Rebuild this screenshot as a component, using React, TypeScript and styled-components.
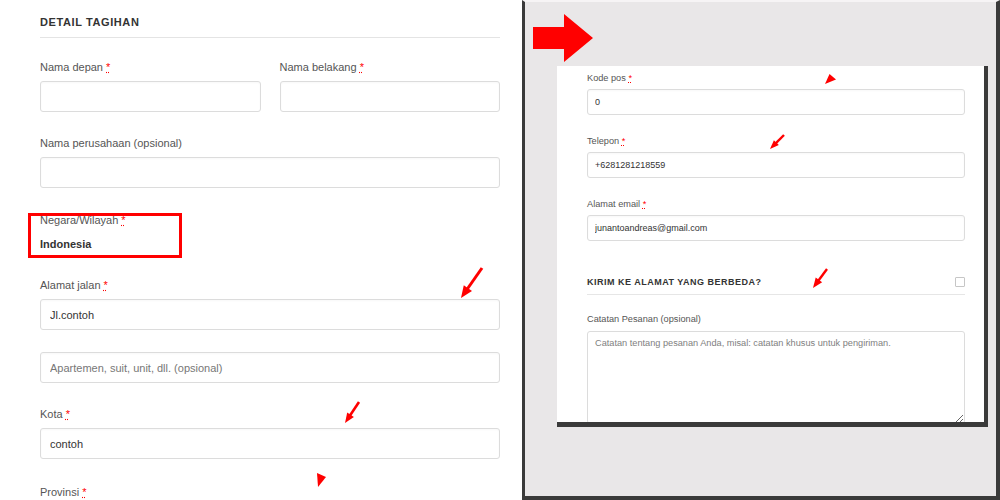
import React from "react";
import styled, { createGlobalStyle } from "styled-components";

const GlobalStyle = createGlobalStyle`
  html, body { margin: 0; padding: 0; background: #fff; }
  body { font-family: "Liberation Sans", Arial, sans-serif; }
  * { box-sizing: border-box; }
`;

const Page = styled.div`
  position: relative;
  display: flex;
  width: 1000px;
  height: 500px;
  overflow: hidden;
  background: #fff;
`;

const LeftPane = styled.section`
  flex: none;
  width: 522px;
  padding: 0 22px 0 40px;
`;

const SectionTitle = styled.h3`
  margin: 0;
  padding: 16px 0 8px;
  border-bottom: 1px solid #e4e4e4;
  font-size: 11px;
  line-height: 13px;
  font-weight: 700;
  letter-spacing: 0.6px;
  color: #333;
`;

const TwoCols = styled.div`
  display: grid;
  grid-template-columns: 1fr 1fr;
  column-gap: 19px;
  margin-top: 22px;
`;

const Field = styled.div<{ $gap?: number }>`
  margin-top: ${(p) => p.$gap ?? 0}px;
`;

const Label = styled.label<{ $compact?: boolean; $after?: number }>`
  display: block;
  font-size: ${(p) => (p.$compact ? "9.2px" : "11px")};
  line-height: ${(p) => (p.$compact ? "12px" : "14px")};
  color: #555;
  margin-bottom: ${(p) => p.$after ?? (p.$compact ? 5 : 7)}px;
`;

const Req = styled.abbr`
  color: #f00;
  text-decoration: underline dotted #f00;
`;

const Input = styled.input<{ $compact?: boolean; $gap?: number }>`
  display: block;
  width: 100%;
  height: ${(p) => (p.$compact ? "26px" : "31px")};
  margin: ${(p) => p.$gap ?? 0}px 0 0;
  padding: 0 ${(p) => (p.$compact ? "7px" : "9px")};
  border: 1px solid #dcdcdc;
  border-radius: 3px;
  background: #fff;
  box-shadow: inset 0 1px 2px rgba(0, 0, 0, 0.03);
  font-family: "Liberation Sans", Arial, sans-serif;
  font-size: ${(p) => (p.$compact ? "9px" : "11px")};
  color: #333;
  outline: none;
  &::placeholder {
    color: #777;
  }
`;

const Value = styled.div`
  margin-top: 10px;
  font-size: 11px;
  line-height: 14px;
  font-weight: 700;
  color: #333;
`;

const RightFrame = styled.section`
  flex: none;
  width: 478px;
  height: 500px;
  background: #e9e7e8;
  border-top: 2px solid #f6f4f5;
  border-left: 3px solid #3a3a3a;
  border-right: 4px solid #3a3a3a;
  border-bottom: 4px solid #3a3a3a;
  padding: 64px 0 0 32px;
`;

const Panel = styled.div`
  width: 431px;
  height: 361px;
  background: #fff;
  border-right: 4px solid #3a3a3a;
  border-bottom: 5px solid #3a3a3a;
  padding: 6px 19px 0 30px;
  overflow: hidden;
`;

const ShipHeading = styled.div`
  display: flex;
  align-items: center;
  justify-content: space-between;
  margin-top: 35px;
  padding-bottom: 6px;
  border-bottom: 1px solid #e6e6e6;
`;

const ShipTitle = styled.h3`
  margin: 0;
  font-size: 9px;
  line-height: 12px;
  font-weight: 700;
  letter-spacing: 0.5px;
  color: #333;
`;

const CheckBox = styled.span`
  display: block;
  width: 10px;
  height: 10px;
  border: 1px solid #c6c6c6;
  border-radius: 1px;
  background: #fff;
`;

const TextArea = styled.textarea`
  display: block;
  width: 100%;
  height: 93px;
  padding: 5px 7px;
  border: 1px solid #dcdcdc;
  border-radius: 3px;
  font-family: "Liberation Sans", Arial, sans-serif;
  font-size: 9.2px;
  line-height: 12px;
  color: #333;
  resize: vertical;
  outline: none;
  &::placeholder {
    color: #808080;
  }
`;

const Overlay = styled.svg`
  position: absolute;
  left: 0;
  top: 0;
  pointer-events: none;
`;

type ArrowSpec = { tail: [number, number]; tip: [number, number]; head: number; width: number; shaft: number };

const arrows: ArrowSpec[] = [
  { tail: [482, 268], tip: [461, 298], head: 12, width: 10, shaft: 3 },
  { tail: [359, 402], tip: [345, 423], head: 10, width: 8, shaft: 2.6 },
  { tail: [784, 135], tip: [770, 149], head: 9, width: 7, shaft: 2.4 },
  { tail: [827, 269], tip: [813, 288], head: 10, width: 8, shaft: 2.4 },
];

function Arrow({ tail, tip, head, width, shaft }: ArrowSpec) {
  const dx = tip[0] - tail[0];
  const dy = tip[1] - tail[1];
  const len = Math.hypot(dx, dy);
  const ux = dx / len;
  const uy = dy / len;
  const nx = -uy;
  const ny = ux;
  const bx = tip[0] - ux * head;
  const by = tip[1] - uy * head;
  const pts = [
    [tip[0], tip[1]],
    [bx + (nx * width) / 2, by + (ny * width) / 2],
    [bx - (nx * width) / 2, by - (ny * width) / 2],
  ]
    .map((p) => p.join(","))
    .join(" ");
  return (
    <g fill="#f00" stroke="none">
      <line x1={tail[0]} y1={tail[1]} x2={bx + ux} y2={by + uy} stroke="#f00" strokeWidth={shaft} />
      <polygon points={pts} />
    </g>
  );
}

function Annotations() {
  return (
    <Overlay width="1000" height="500" viewBox="0 0 1000 500">
      <rect x="29.5" y="214.5" width="151" height="42" fill="none" stroke="#f00" strokeWidth="3" />
      <polygon points="533,27 564,27 564,14 593,38 564,62 564,49 533,49" fill="#f00" />
      {arrows.map((a, i) => (
        <Arrow key={i} {...a} />
      ))}
      <polygon points="317,473 326,477 318,487" fill="#f00" />
      <polygon points="825,84 829.5,74 836,79.5" fill="#f00" />
    </Overlay>
  );
}

function RequiredLabel({ text, compact }: { text: string; compact?: boolean }) {
  return (
    <Label $compact={compact}>
      {text} <Req title="wajib">*</Req>
    </Label>
  );
}

export default function App() {
  return (
    <>
      <GlobalStyle />
      <Page>
        <LeftPane>
          <SectionTitle>DETAIL TAGIHAN</SectionTitle>
          <TwoCols>
            <Field>
              <RequiredLabel text="Nama depan" />
              <Input />
            </Field>
            <Field>
              <RequiredLabel text="Nama belakang" />
              <Input />
            </Field>
          </TwoCols>
          <Field $gap={24}>
            <Label>Nama perusahaan (opsional)</Label>
            <Input />
          </Field>
          <Field $gap={25}>
            <RequiredLabel text="Negara/Wilayah" />
            <Value>Indonesia</Value>
          </Field>
          <Field $gap={27}>
            <RequiredLabel text="Alamat jalan" />
            <Input defaultValue="Jl.contoh" />
            <Input $gap={22} placeholder="Apartemen, suit, unit, dll. (opsional)" />
          </Field>
          <Field $gap={24}>
            <RequiredLabel text="Kota" />
            <Input defaultValue="contoh" />
          </Field>
          <Field $gap={26}>
            <RequiredLabel text="Provinsi" />
          </Field>
        </LeftPane>
        <RightFrame>
          <Panel>
            <Field>
              <RequiredLabel text="Kode pos" compact />
              <Input $compact defaultValue="0" />
            </Field>
            <Field $gap={20}>
              <RequiredLabel text="Telepon" compact />
              <Input $compact defaultValue="+6281281218559" />
            </Field>
            <Field $gap={20}>
              <RequiredLabel text="Alamat email" compact />
              <Input $compact defaultValue="junantoandreas@gmail.com" />
            </Field>
            <ShipHeading>
              <ShipTitle>KIRIM KE ALAMAT YANG BERBEDA?</ShipTitle>
              <CheckBox />
            </ShipHeading>
            <Field $gap={18}>
              <Label $compact $after={6}>
                Catatan Pesanan (opsional)
              </Label>
              <TextArea placeholder="Catatan tentang pesanan Anda, misal: catatan khusus untuk pengiriman." />
            </Field>
          </Panel>
        </RightFrame>
        <Annotations />
      </Page>
    </>
  );
}
